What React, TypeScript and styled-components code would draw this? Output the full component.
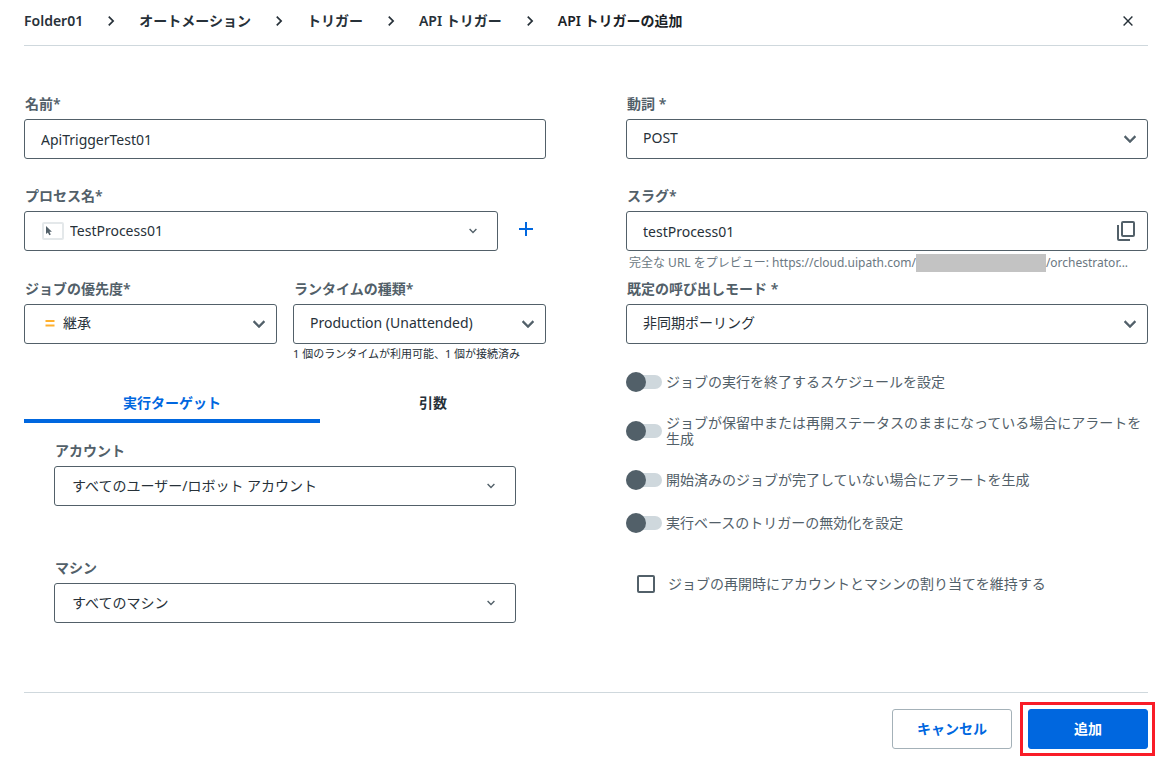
import React, { useState } from "react";
import styled, { createGlobalStyle, css } from "styled-components";

const color = {
  ink: "#273139",
  muted: "#526069",
  hint: "#6b7882",
  line: "#cfd8dd",
  blue: "#0067df",
  orange: "#ffb02e",
  red: "#f91c27",
};

const GlobalStyle = createGlobalStyle`
  *, *::before, *::after { box-sizing: border-box; }
  body {
    margin: 0;
    background: #fff;
    color: ${color.ink};
  }
  body, button, input, select {
    font-family: "Noto Sans", "Noto Sans CJK JP", sans-serif;
    font-size: 14px;
    line-height: 20px;
  }
`;

const Page = styled.div`
  padding: 0 20px 8px 24px;
`;

const Header = styled.header`
  display: flex;
  align-items: center;
  justify-content: space-between;
  height: 46px;
  padding-bottom: 4px;
  border-bottom: 1px solid ${color.line};
`;

const Crumbs = styled.nav`
  display: flex;
  align-items: center;
  gap: 18px;
`;

const Crumb = styled.a<{ $current?: boolean }>`
  color: ${(p) => (p.$current ? "#1b2227" : color.ink)};
  font-weight: 600;
  text-decoration: none;
  white-space: nowrap;
`;

const IconButton = styled.button`
  display: flex;
  align-items: center;
  justify-content: center;
  flex: none;
  width: 40px;
  height: 36px;
  padding: 0;
  border: 0;
  background: none;
  color: ${color.ink};
  cursor: pointer;
`;

const Form = styled.main`
  display: grid;
  grid-template-columns: minmax(0, 1fr) minmax(0, 1fr);
  column-gap: 80px;
  padding: 48px 0 69px;
`;

const Column = styled.div`
  display: flex;
  flex-direction: column;
`;

const Field = styled.div<{ $after?: number }>`
  display: flex;
  flex-direction: column;
  gap: 5px;
  margin-bottom: ${(p) => p.$after ?? 0}px;
`;

const Label = styled.label`
  color: ${color.muted};
  font-weight: 600;
  padding-left: 1px;
`;

const Control = styled.div`
  position: relative;
  flex: 1;
  display: flex;
`;

const box = css`
  width: 100%;
  height: 40px;
  border: 1px solid ${color.muted};
  border-radius: 3px;
  background: #fff;
  color: ${color.ink};
`;

const TextInput = styled.input`
  ${box}
  padding: 0 16px;
`;

const Select = styled.select<{ $inset?: number; $small?: boolean }>`
  ${box}
  appearance: none;
  padding: 0 36px ${(p) => (p.$small ? 0 : 2)}px ${(p) => p.$inset ?? 16}px;
`;

const Adornment = styled.span<{ $side: "left" | "right"; $offset: number }>`
  position: absolute;
  top: 0;
  bottom: 0;
  ${(p) => p.$side}: ${(p) => p.$offset}px;
  display: flex;
  align-items: center;
  color: ${color.muted};
  pointer-events: none;
`;

const CopyButton = styled(IconButton)`
  position: absolute;
  right: 2px;
  top: 2px;
  color: ${color.muted};
`;

const Inline = styled.div`
  display: flex;
  gap: 8px;
`;

const AddButton = styled(IconButton)`
  color: ${color.blue};
`;

const Pair = styled.div`
  display: grid;
  grid-template-columns: minmax(0, 1fr) minmax(0, 1fr);
  column-gap: 16px;
  align-items: start;
`;

const Note = styled.div`
  font-size: 11px;
  line-height: 20px;
  white-space: nowrap;
`;

const UrlPreview = styled.div`
  display: flex;
  align-items: center;
  height: 28px;
  padding: 0 3px 4px;
  color: ${color.hint};
  font-size: 12px;
  white-space: nowrap;
`;

const Redacted = styled.span`
  flex: 0 1 130px;
  height: 18px;
  background: #c3c3c3;
`;

const Tabs = styled.div`
  display: flex;
  margin-top: 19px;
`;

const Tab = styled.button<{ $active?: boolean }>`
  flex: 1 1 auto;
  height: 40px;
  padding: 0;
  border: 0 solid transparent;
  border-width: 4px 0;
  border-bottom-color: ${(p) => (p.$active ? color.blue : "transparent")};
  background: none;
  color: ${(p) => (p.$active ? color.blue : color.ink)};
  font-weight: 600;
  cursor: pointer;
`;

const TabPanel = styled.div`
  display: flex;
  flex-direction: column;
  gap: 52px;
  padding: 18px 30px 0;
`;

const Toggles = styled.div`
  display: flex;
  flex-direction: column;
  gap: 23px;
  margin-top: 28px;
`;

const ToggleRow = styled.label`
  display: flex;
  align-items: center;
  gap: 4px;
  min-height: 20px;
  color: ${color.muted};
  line-height: 16px;
`;

const Switch = styled.input`
  appearance: none;
  flex: none;
  display: flex;
  align-items: center;
  width: 36px;
  height: 14px;
  margin: 0;
  background: ${color.line};
  border-radius: 7px;
  cursor: pointer;

  &::before {
    content: "";
    flex: none;
    width: 20px;
    height: 20px;
    border-radius: 50%;
    background: ${color.muted};
  }
  &:checked::before {
    margin-left: 16px;
    background: ${color.blue};
  }
`;

const CheckRow = styled.label`
  display: flex;
  align-items: center;
  gap: 13px;
  margin: 41px 0 0 11px;
  color: ${color.muted};
`;

const Checkbox = styled.input`
  appearance: none;
  flex: none;
  width: 18px;
  height: 18px;
  margin: 0;
  border: 2px solid ${color.muted};
  border-radius: 2px;

  &:checked {
    background: ${color.blue};
  }
`;

const Footer = styled.footer`
  display: flex;
  justify-content: flex-end;
  gap: 16px;
  padding-top: 16px;
  border-top: 1px solid ${color.line};
`;

const Button = styled.button<{ $primary?: boolean }>`
  width: 120px;
  height: 40px;
  border: 1px solid ${(p) => (p.$primary ? color.blue : "#a4b1b8")};
  border-radius: 3px;
  background: ${(p) => (p.$primary ? color.blue : "#fff")};
  color: ${(p) => (p.$primary ? "#fff" : color.blue)};
  font-weight: 600;
  cursor: pointer;
`;

const Highlight = styled.div`
  position: relative;

  &::after {
    content: "";
    position: absolute;
    inset: -7px -7px -7px -8px;
    border: 3px solid ${color.red};
    pointer-events: none;
  }
`;

const Chevron = () => (
  <svg width="24" height="24" viewBox="0 0 24 24" fill="currentColor" stroke="currentColor" strokeWidth="0.4" aria-hidden>
    <path d="M16.59 8.59 12 13.17 7.41 8.59 6 10l6 6 6-6z" />
  </svg>
);

const SmallChevron = () => (
  <svg width="8" height="6" viewBox="0 0 8 6" fill="none" stroke="currentColor" strokeWidth="1.4" aria-hidden>
    <path d="M0.6 1 4 4.4 7.4 1" />
  </svg>
);

const CrumbArrow = () => (
  <svg width="20" height="20" viewBox="0 0 24 24" fill={color.ink} aria-hidden>
    <path d="M10 6 8.59 7.41 13.17 12l-4.58 4.59L10 18l6-6z" />
  </svg>
);

const CloseIcon = () => (
  <svg width="10" height="10" viewBox="0 0 10 10" fill="none" stroke="currentColor" strokeWidth="1.4" aria-hidden>
    <path d="M0.6 0.6 9.4 9.4M9.4 0.6 0.6 9.4" />
  </svg>
);

const PlusIcon = () => (
  <svg width="14" height="14" viewBox="0 0 14 14" fill="none" stroke="currentColor" strokeWidth="2" aria-hidden>
    <path d="M7 0v14M0 7h14" />
  </svg>
);

const CopyIcon = () => (
  <svg width="18" height="20" viewBox="0 0 18 20" fill="none" stroke="currentColor" strokeWidth="2" aria-hidden>
    <rect x="5" y="1" width="12" height="14" rx="1" />
    <path d="M1 4v14a1 1 0 0 0 1 1h11" />
  </svg>
);

const ProcessIcon = () => (
  <svg width="22" height="18" viewBox="0 0 22 18" fill="none" aria-hidden>
    <rect x="1" y="1" width="20" height="16" rx="1" stroke="#e4e8ea" strokeWidth="2" />
    <path d="M4 4v8l1.9-1.6 1.4 2.9 1.5-.7-1.4-2.8h2.5z" fill={color.muted} />
  </svg>
);

const EqualsIcon = () => (
  <svg width="16" height="8" viewBox="-3 0 16 8" fill="none" stroke={color.orange} strokeWidth="1.8" aria-hidden>
    <path d="M0.5 1h9M0.5 5.5h9" />
  </svg>
);

interface SelectControlProps {
  id: string;
  value: string;
  inset?: number;
  small?: boolean;
  icon?: React.ReactNode;
}

const SelectControl = ({ id, value, inset, small, icon }: SelectControlProps) => (
  <Control>
    <Select id={id} defaultValue={value} $inset={inset} $small={small}>
      <option>{value}</option>
    </Select>
    {icon && (
      <Adornment $side="left" $offset={18}>
        {icon}
      </Adornment>
    )}
    <Adornment $side="right" $offset={small ? 21 : 6}>
      {small ? <SmallChevron /> : <Chevron />}
    </Adornment>
  </Control>
);

const crumbs = ["Folder01", "オートメーション", "トリガー", "API トリガー", "API トリガーの追加"];

const toggles = [
  "ジョブの実行を終了するスケジュールを設定",
  "ジョブが保留中または再開ステータスのままになっている場合にアラートを生成",
  "開始済みのジョブが完了していない場合にアラートを生成",
  "実行ベースのトリガーの無効化を設定",
];

export default function App() {
  const [tab, setTab] = useState(0);

  return (
    <Page lang="ja">
      <GlobalStyle />
      <Header>
        <Crumbs>
          {crumbs.map((c, i) => (
            <React.Fragment key={c}>
              {i > 0 && <CrumbArrow />}
              <Crumb href="#" $current={i === crumbs.length - 1}>
                {c}
              </Crumb>
            </React.Fragment>
          ))}
        </Crumbs>
        <IconButton type="button" aria-label="閉じる">
          <CloseIcon />
        </IconButton>
      </Header>

      <Form>
        <Column>
          <Field $after={27}>
            <Label htmlFor="name">名前*</Label>
            <TextInput id="name" defaultValue="ApiTriggerTest01" />
          </Field>
          <Field $after={28}>
            <Label htmlFor="process">プロセス名*</Label>
            <Inline>
              <SelectControl id="process" value="TestProcess01" inset={45} small icon={<ProcessIcon />} />
              <AddButton type="button" aria-label="追加">
                <PlusIcon />
              </AddButton>
            </Inline>
          </Field>
          <Pair>
            <Field>
              <Label htmlFor="priority">ジョブの優先度*</Label>
              <SelectControl id="priority" value="継承" inset={38} icon={<EqualsIcon />} />
            </Field>
            <div>
              <Field>
                <Label htmlFor="runtime">ランタイムの種類*</Label>
                <SelectControl id="runtime" value="Production (Unattended)" />
              </Field>
              <Note>1 個のランタイムが利用可能、1 個が接続済み</Note>
            </div>
          </Pair>
          <Tabs role="tablist">
            {["実行ターゲット", "引数"].map((t, i) => (
              <Tab key={t} type="button" role="tab" aria-selected={tab === i} $active={tab === i} onClick={() => setTab(i)}>
                {t}
              </Tab>
            ))}
          </Tabs>
          <TabPanel role="tabpanel">
            <Field>
              <Label htmlFor="account">アカウント</Label>
              <SelectControl id="account" value="すべてのユーザー/ロボット アカウント" inset={17} small />
            </Field>
            <Field>
              <Label htmlFor="machine">マシン</Label>
              <SelectControl id="machine" value="すべてのマシン" inset={17} small />
            </Field>
          </TabPanel>
        </Column>

        <Column>
          <Field $after={27}>
            <Label htmlFor="verb">動詞 *</Label>
            <SelectControl id="verb" value="POST" />
          </Field>
          <Field>
            <Label htmlFor="slug">スラグ*</Label>
            <Control>
              <TextInput id="slug" defaultValue="testProcess01" />
              <CopyButton type="button" aria-label="コピー">
                <CopyIcon />
              </CopyButton>
            </Control>
          </Field>
          <UrlPreview>
            完全な URL をプレビュー: https://cloud.uipath.com/
            <Redacted />
            /orchestrator...
          </UrlPreview>
          <Field>
            <Label htmlFor="mode">既定の呼び出しモード *</Label>
            <SelectControl id="mode" value="非同期ポーリング" />
          </Field>
          <Toggles>
            {toggles.map((t) => (
              <ToggleRow key={t}>
                <Switch type="checkbox" role="switch" />
                <span>{t}</span>
              </ToggleRow>
            ))}
          </Toggles>
          <CheckRow>
            <Checkbox type="checkbox" />
            ジョブの再開時にアカウントとマシンの割り当てを維持する
          </CheckRow>
        </Column>
      </Form>

      <Footer>
        <Button type="button">キャンセル</Button>
        <Highlight>
          <Button type="submit" $primary>
            追加
          </Button>
        </Highlight>
      </Footer>
    </Page>
  );
}
